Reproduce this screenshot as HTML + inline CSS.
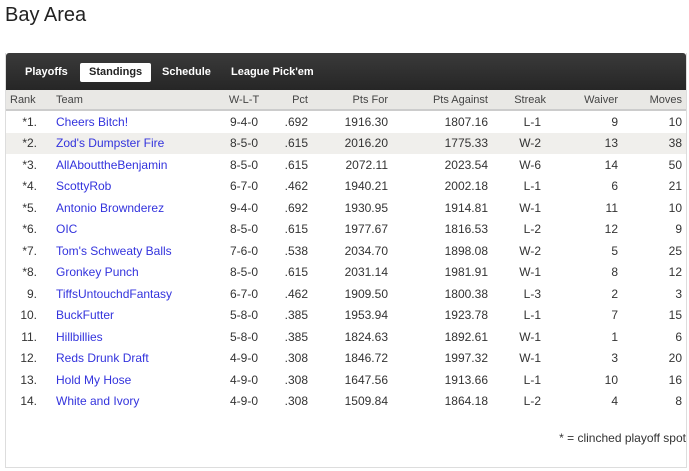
<!DOCTYPE html>
<html><head><style>
body{margin:0;width:689px;height:471px;background:#fff;font-family:"Liberation Sans",Arial,sans-serif;position:relative;overflow:hidden}
h1{position:absolute;left:5px;top:4px;margin:0;font-size:20px;font-weight:normal;color:#222}
.panel{position:absolute;left:5px;top:53px;width:680px;height:414px;border:1px solid #ddd;border-top:none}
.bar{position:absolute;left:0;top:0;width:680px;height:37px;background:linear-gradient(#3a3a3a,#262626);border-radius:3px 3px 0 0}
.tab{position:absolute;top:10px;height:19px;line-height:19px;font-size:11px;font-weight:bold;color:#fff}
.tab.on{background:#fff;color:#222;border-radius:2px;padding:0 9px}
table{position:absolute;left:0;top:37px;width:680px;border-collapse:collapse;font-size:12px;table-layout:fixed}
th{font-weight:normal;color:#444;background:#e9e8e5;height:19px;border-bottom:2px solid #ccc;font-size:11px;padding:0;white-space:nowrap}
td{height:21.5px;padding:0;color:#333;white-space:nowrap}
tr.g td{background:#f0efec}
a{color:#3333dd;text-decoration:none}
.r{text-align:right}.c{text-align:center}.l{text-align:left}
.s{text-align:right;padding-right:33px}
.m{text-align:right;padding-right:4px}
.note{position:absolute;right:0;top:378px;font-size:12px;color:#333}
</style></head><body>
<h1>Bay Area</h1>
<div class="panel">
<div class="bar">
<span class="tab" style="left:19px">Playoffs</span>
<span class="tab on" style="left:74px">Standings</span>
<span class="tab" style="left:156px">Schedule</span>
<span class="tab" style="left:225px">League Pick'em</span>
</div>
<table>
<colgroup><col style="width:31px"><col style="width:19px"><col style="width:165px"><col style="width:46px"><col style="width:41px"><col style="width:80px"><col style="width:100px"><col style="width:86px"><col style="width:44px"><col style="width:68px"></colgroup>
<tr><th class="l" style="padding-left:4px">Rank</th><th></th><th class="l">Team</th><th class="c">W-L-T</th><th class="r">Pct</th><th class="r">Pts For</th><th class="r">Pts Against</th><th class="r" style="padding-right:28px">Streak</th><th class="r">Waiver</th><th class="m">Moves</th></tr>
<tr><td class="r">*1.</td><td></td><td><a>Cheers Bitch!</a></td><td class="c">9-4-0</td><td class="r">.692</td><td class="r">1916.30</td><td class="r">1807.16</td><td class="s">L-1</td><td class="r">9</td><td class="m">10</td></tr>
<tr class="g"><td class="r">*2.</td><td></td><td><a>Zod's Dumpster Fire</a></td><td class="c">8-5-0</td><td class="r">.615</td><td class="r">2016.20</td><td class="r">1775.33</td><td class="s">W-2</td><td class="r">13</td><td class="m">38</td></tr>
<tr><td class="r">*3.</td><td></td><td><a>AllAbouttheBenjamin</a></td><td class="c">8-5-0</td><td class="r">.615</td><td class="r">2072.11</td><td class="r">2023.54</td><td class="s">W-6</td><td class="r">14</td><td class="m">50</td></tr>
<tr><td class="r">*4.</td><td></td><td><a>ScottyRob</a></td><td class="c">6-7-0</td><td class="r">.462</td><td class="r">1940.21</td><td class="r">2002.18</td><td class="s">L-1</td><td class="r">6</td><td class="m">21</td></tr>
<tr><td class="r">*5.</td><td></td><td><a>Antonio Brownderez</a></td><td class="c">9-4-0</td><td class="r">.692</td><td class="r">1930.95</td><td class="r">1914.81</td><td class="s">W-1</td><td class="r">11</td><td class="m">10</td></tr>
<tr><td class="r">*6.</td><td></td><td><a>OIC</a></td><td class="c">8-5-0</td><td class="r">.615</td><td class="r">1977.67</td><td class="r">1816.53</td><td class="s">L-2</td><td class="r">12</td><td class="m">9</td></tr>
<tr><td class="r">*7.</td><td></td><td><a>Tom's Schweaty Balls</a></td><td class="c">7-6-0</td><td class="r">.538</td><td class="r">2034.70</td><td class="r">1898.08</td><td class="s">W-2</td><td class="r">5</td><td class="m">25</td></tr>
<tr><td class="r">*8.</td><td></td><td><a>Gronkey Punch</a></td><td class="c">8-5-0</td><td class="r">.615</td><td class="r">2031.14</td><td class="r">1981.91</td><td class="s">W-1</td><td class="r">8</td><td class="m">12</td></tr>
<tr><td class="r">9.</td><td></td><td><a>TiffsUntouchdFantasy</a></td><td class="c">6-7-0</td><td class="r">.462</td><td class="r">1909.50</td><td class="r">1800.38</td><td class="s">L-3</td><td class="r">2</td><td class="m">3</td></tr>
<tr><td class="r">10.</td><td></td><td><a>BuckFutter</a></td><td class="c">5-8-0</td><td class="r">.385</td><td class="r">1953.94</td><td class="r">1923.78</td><td class="s">L-1</td><td class="r">7</td><td class="m">15</td></tr>
<tr><td class="r">11.</td><td></td><td><a>Hillbillies</a></td><td class="c">5-8-0</td><td class="r">.385</td><td class="r">1824.63</td><td class="r">1892.61</td><td class="s">W-1</td><td class="r">1</td><td class="m">6</td></tr>
<tr><td class="r">12.</td><td></td><td><a>Reds Drunk Draft</a></td><td class="c">4-9-0</td><td class="r">.308</td><td class="r">1846.72</td><td class="r">1997.32</td><td class="s">W-1</td><td class="r">3</td><td class="m">20</td></tr>
<tr><td class="r">13.</td><td></td><td><a>Hold My Hose</a></td><td class="c">4-9-0</td><td class="r">.308</td><td class="r">1647.56</td><td class="r">1913.66</td><td class="s">L-1</td><td class="r">10</td><td class="m">16</td></tr>
<tr><td class="r">14.</td><td></td><td><a>White and Ivory</a></td><td class="c">4-9-0</td><td class="r">.308</td><td class="r">1509.84</td><td class="r">1864.18</td><td class="s">L-2</td><td class="r">4</td><td class="m">8</td></tr>
</table>
<div class="note">* = clinched playoff spot</div>
</div>
</body></html>
